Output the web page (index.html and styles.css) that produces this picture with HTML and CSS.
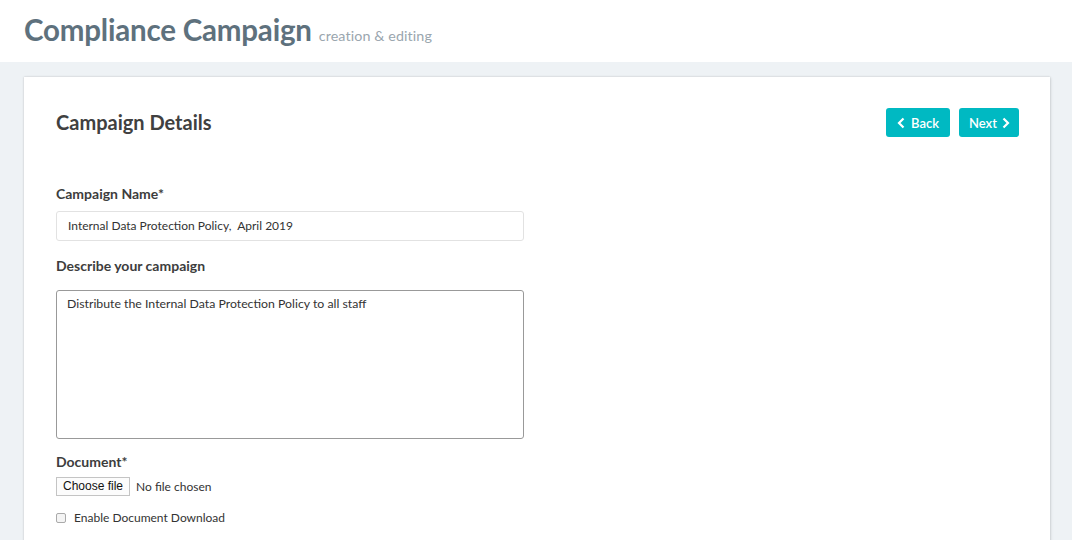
FILE: index.html
```html
<!DOCTYPE html>
<html lang="en">
<head>
<meta charset="utf-8">
<title>Compliance Campaign</title>
<link rel="stylesheet" href="styles.css">
</head>
<body>
<header class="top">
  <h1 class="title">Compliance Campaign <small class="subtitle">creation &amp; editing</small></h1>
</header>
<main class="page">
  <section class="card">
    <div class="card-head">
      <h2 class="card-title">Campaign Details</h2>
      <div class="actions">
        <button class="btn btn-back" type="button"><svg class="chev" viewBox="0 0 8 12" width="8" height="12"><path d="M6.5 1.5 2 6l4.5 4.5" fill="none" stroke="#fff" stroke-width="2.2"/></svg>Back</button>
        <button class="btn btn-next" type="button">Next<svg class="chev" viewBox="0 0 8 12" width="8" height="12"><path d="M1.5 1.5 6 6l-4.5 4.5" fill="none" stroke="#fff" stroke-width="2.2"/></svg></button>
      </div>
    </div>
    <form class="form">
      <label class="label">Campaign Name*</label>
      <div class="input">Internal Data Protection Policy,&nbsp; April 2019</div>
      <label class="label">Describe your campaign</label>
      <div class="textarea">Distribute the Internal Data Protection Policy to all staff</div>
      <label class="label">Document*</label>
      <div class="file-row"><span class="file-btn">Choose file</span><span class="file-name">No file chosen</span></div>
      <div class="check-row"><span class="checkbox"></span><span class="check-label">Enable Document Download</span></div>
    </form>
  </section>
</main>
</body>
</html>
```
FILE: styles.css
```css
* { box-sizing: border-box; }
html, body { margin: 0; padding: 0; }
body {
  background: #eef2f5;
  font-family: "Lato", "Noto Sans", sans-serif;
  color: #3d3d3d;
  height: 540px;
  overflow: hidden;
}
.top {
  background: #fff;
  height: 62px;
  padding: 10px 24px 0;
}
.title {
  margin: 0;
  font-size: 29.5px;
  font-weight: 700;
  color: #5e717d;
  letter-spacing: -0.2px;
  line-height: 40px;
}
.subtitle {
  font-size: 14.3px;
  font-weight: 400;
  color: #9aa6ae;
  letter-spacing: 0.1px;
  margin-left: 0;
}
.page {
  padding: 15px 22px 0 24px;
}
.card {
  background: #fff;
  box-shadow: 0 0 2px rgba(0,0,0,0.18), 1px 1px 3px rgba(0,0,0,0.08);
  padding: 31px 31px 0 32px;
  height: 470px;
}
.card-head {
  display: flex;
  justify-content: space-between;
  align-items: center;
}
.card-title {
  margin: 0;
  font-size: 20px;
  font-weight: 700;
  color: #404040;
  position: relative;
  top: -1px;
}
.actions { display: flex; gap: 9px; }
.btn {
  display: inline-flex;
  align-items: center;
  gap: 6px;
  height: 29px;
  padding: 0 11px;
  background: #00b9c2;
  color: #fff;
  border: 0;
  border-radius: 3px;
  font-family: inherit;
  font-size: 13px;
  font-weight: 600;
}
.btn-next { padding: 0 9px 0 10px; gap: 5px; }
.chev { display: block; }
.form {
  display: flex;
  flex-direction: column;
  align-items: flex-start;
  margin-top: 48px;
}
.label {
  font-size: 14px;
  font-weight: 700;
  color: #3d3d3d;
  line-height: 18px;
  margin-bottom: 8px;
}
.input {
  width: 468px;
  height: 30px;
  border: 1px solid #e2e2e2;
  border-radius: 3px;
  padding: 0 11px;
  font-size: 12px;
  line-height: 28px;
  color: #333;
  margin-bottom: 16px;
}
.textarea {
  width: 468px;
  height: 149px;
  border: 1px solid #999;
  border-radius: 3px;
  padding: 5px 10px;
  font-size: 12.3px;
  line-height: 16px;
  color: #333;
  margin-top: 7px;
  margin-bottom: 14px;
}
.file-row {
  display: flex;
  align-items: center;
  gap: 6px;
  margin-top: -2px;
}
.file-btn {
  font-family: "Liberation Sans", Arial, sans-serif;
  font-size: 12px;
  border: 1px solid #c4c4c4;
  background: #fcfcfc;
  padding: 1px 6px;
  line-height: 15px;
  color: #111;
}
.file-name {
  font-size: 12px;
  color: #333;
}
.check-row {
  display: flex;
  align-items: center;
  gap: 8px;
  margin-top: 14px;
}
.checkbox {
  width: 10px;
  height: 10px;
  border: 1px solid #aaa;
  border-radius: 2px;
  background: #f4f4f4;
}
.check-label {
  font-size: 12px;
  color: #333;
}
```
